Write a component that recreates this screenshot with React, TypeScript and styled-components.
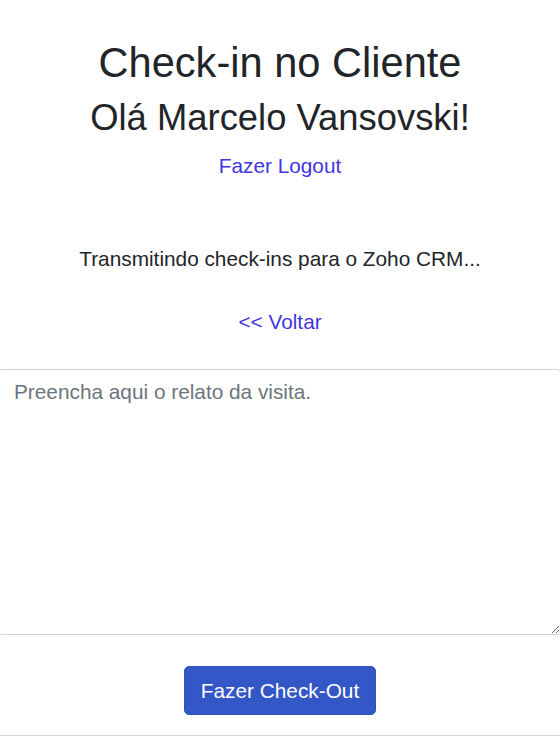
import React from "react";
import styled, { createGlobalStyle } from "styled-components";

const Global = createGlobalStyle`
  html, body { margin: 0; padding: 0; background: #fff; }
  body {
    font-family: "Liberation Sans", Arial, sans-serif;
    color: #212529;
    overflow: hidden;
  }
  * { box-sizing: border-box; }
`;

const Page = styled.div`
  width: 560px;
  display: flex;
  flex-direction: column;
  align-items: center;
  padding-top: 38px;
`;

const Title = styled.h1`
  margin: 0;
  font-size: 41.6px;
  font-weight: 400;
  line-height: 50px;
`;

const Greeting = styled.h2`
  margin: 8px 0 0;
  font-size: 36.4px;
  font-weight: 400;
  line-height: 43px;
`;

const Link = styled.a<{ $top: number }>`
  margin-top: ${(p) => p.$top}px;
  font-size: 20.8px;
  line-height: 31px;
  color: #4136e0;
  text-decoration: none;
  cursor: pointer;
`;

const Status = styled.p`
  margin: 62px 0 0;
  font-size: 20.8px;
  line-height: 31px;
`;

const Report = styled.textarea`
  display: block;
  align-self: flex-start;
  margin: 32px 0 0 -2px;
  width: 563px;
  height: 266px;
  padding: 6px 14px 6px 15px;
  border: 1px solid #ced4da;
  border-radius: 4px;
  font-family: "Liberation Sans", Arial, sans-serif;
  font-size: 20.8px;
  line-height: 31px;
  color: #495057;
  background: #fff;
  outline: none;
  &::placeholder { color: #6c757d; }
`;

const Button = styled.button`
  margin-top: 31px;
  padding: 0 16px;
  height: 49px;
  font-family: "Liberation Sans", Arial, sans-serif;
  font-size: 20.8px;
  line-height: 31px;
  color: #fff;
  background: #3357c6;
  border: 1px solid #3054c2;
  border-radius: 5px;
  cursor: pointer;
`;

const Divider = styled.div`
  align-self: stretch;
  margin-top: 20px;
  border-top: 1px solid #dcdcdc;
  height: 2px;
`;

export default function App() {
  return (
    <>
      <Global />
      <Page>
        <Title>Check-in no Cliente</Title>
        <Greeting>Olá Marcelo Vansovski!</Greeting>
        <Link $top={11}>Fazer Logout</Link>
        <Status>Transmitindo check-ins para o Zoho CRM...</Status>
        <Link $top={32}>&lt;&lt; Voltar</Link>
        <Report placeholder="Preencha aqui o relato da visita." />
        <Button>Fazer Check-Out</Button>
        <Divider />
      </Page>
    </>
  );
}
